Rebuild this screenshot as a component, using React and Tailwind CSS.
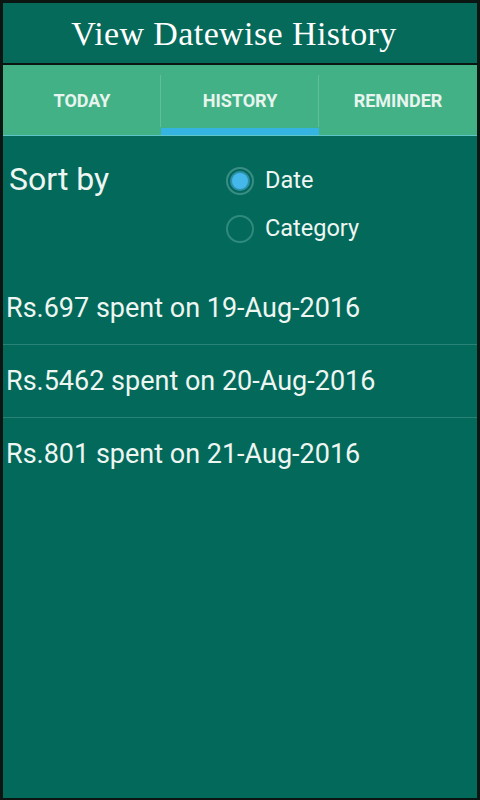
export default function App() {
  const tabs = ['TODAY', 'HISTORY', 'REMINDER'];
  const rows = [
    'Rs.697 spent on 19-Aug-2016',
    'Rs.5462 spent on 20-Aug-2016',
    'Rs.801 spent on 21-Aug-2016',
  ];

  return (
    <div className="w-[480px] h-[800px] bg-[#0b1612] pt-[3px] px-[3px] pb-[2px] flex flex-col">
      {/* Title bar */}
      <div className="h-[60px] bg-[#066a5b] flex items-center justify-center pr-[12px] shrink-0">
        <h1 className="text-white text-[34px] font-['Liberation_Serif',serif] tracking-[0.4px]">
          View Datewise History
        </h1>
      </div>
      <div className="h-[2px] bg-[#0b1612] shrink-0"></div>

      {/* Tabs */}
      <div className="h-[71px] bg-[#42b286] flex shrink-0 border-b border-[#5cc6c9]">
        {tabs.map((t, i) => (
          <div key={t} className="flex-1 relative flex items-center justify-center">
            <span className="text-[#e8f4ee] font-bold text-[18px] font-['Roboto',sans-serif]">{t}</span>
            {i < 2 && <div className="absolute right-0 top-[10px] bottom-[8px] w-px bg-[#5fc096]"></div>}
            {i === 1 && <div className="absolute left-0 right-0 bottom-0 h-[7px] bg-[#35b4e2]"></div>}
          </div>
        ))}
      </div>

      {/* Body */}
      <div className="flex-1 bg-[#03695b] font-['Roboto',sans-serif] text-[#eef6f2]">
        <div className="flex pt-[23px] h-[136px]">
          <div className="w-[223px] pl-[6px] text-[32px] leading-[40px]">Sort by</div>
          <div className="flex flex-col gap-[8px] pt-[2px]">
            <label className="flex items-center gap-[11px] h-[40px]">
              <span className="w-[28px] h-[28px] rounded-full border-2 border-[#3a8d86] flex items-center justify-center">
                <span className="w-[16px] h-[16px] rounded-full bg-[#44b8ea] ring-2 ring-[#2f8fa8]"></span>
              </span>
              <span className="text-[23.5px]">Date</span>
            </label>
            <label className="flex items-center gap-[11px] h-[40px]">
              <span className="w-[28px] h-[28px] rounded-full border-2 border-[#2f8a7c]"></span>
              <span className="text-[23.5px]">Category</span>
            </label>
          </div>
        </div>
        <div>
          {rows.map((r, i) => (
            <div
              key={r}
              className={'h-[73px] flex items-center pl-[3px] text-[27px] ' + (i < rows.length - 1 ? 'border-b border-[#2a8175]' : '')}
            >
              {r}
            </div>
          ))}
        </div>
      </div>
    </div>
  );
}
